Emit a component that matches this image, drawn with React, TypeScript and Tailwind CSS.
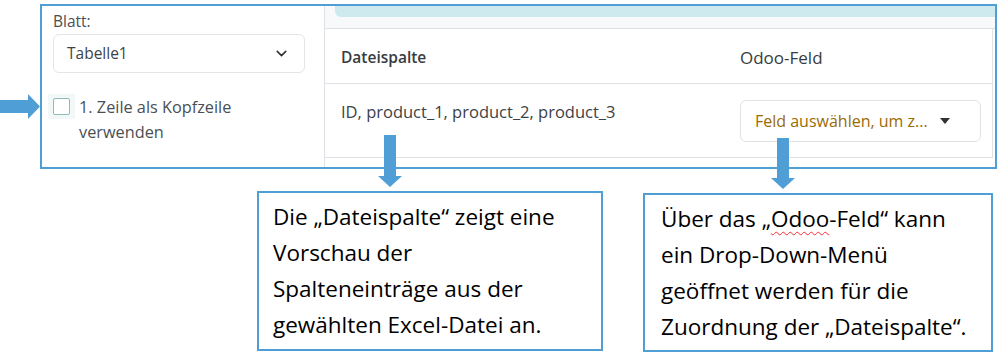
import { ChevronDown } from 'lucide-react';

const BLUE = '#4f9fd6';

// Pfeile der Anmerkungen (Office-Stil)
function ArrowRight() {
    return (
        <svg width="40" height="25" viewBox="0 0 40 25">
            <polygon points="0,6 28,6 28,0 40,12.5 28,25 28,19 0,19" fill={BLUE} />
        </svg>
    );
}

function ArrowDown({ height }: { height: number }) {
    return (
        <svg width="24" height={height} viewBox={`0 0 24 ${height}`}>
            <polygon points={`6,0 18,0 18,${height - 11} 24,${height - 11} 12,${height} 0,${height - 11} 6,${height - 11}`} fill={BLUE} />
        </svg>
    );
}

export default function App() {
    return (
        <div className="relative w-[1001px] h-[355px] bg-white overflow-hidden">
            {/* --- Screenshot-Ausschnitt --- */}
            <div className="flex items-start pt-[4px]">
                <div className="w-[40px] mt-[90px] flex">
                    <ArrowRight />
                </div>
                <div className="w-[957px] h-[165px] border-2 border-[#4f9fd6] flex font-['Open_Sans',sans-serif] text-[#3c4247]">
                    {/* Linke Spalte */}
                    <div className="w-[283px] border-r border-[#dee2e6] pl-[11px] pt-[5px]">
                        <div className="text-[15.5px] leading-[20px] text-[#4a4f54]">Blatt:</div>
                        <div className="mt-[3px] w-[252px] h-[39px] border border-[#e3e6e9] rounded-md flex items-center justify-between pl-[13px] pr-[14px] text-[15.5px]">
                            <span>Tabelle1</span>
                            <ChevronDown size={17} strokeWidth={2.2} color="#2f3337" />
                        </div>
                        <div className="mt-[22px] flex items-start">
                            <div className="-ml-[5px] mt-[-1px] w-[27px] h-[25px] bg-[#f2f7f7] flex items-center justify-center">
                                <div className="w-[17px] h-[17px] border border-[#8dbcbc] bg-white rounded-[2px]" />
                            </div>
                            <div className="ml-[4px] text-[16.3px] leading-[25px] text-[#4a4f54]">
                                1. Zeile als Kopfzeile
                                <br />
                                verwenden
                            </div>
                        </div>
                    </div>
                    {/* Rechte Spalte */}
                    <div className="flex-1 flex flex-col">
                        <div className="h-[23px] bg-[#f8f9fa] border-b border-[#dee2e6] pl-[10px]">
                            <div className="h-[11px] bg-[#cfeaef] rounded-bl-md" />
                        </div>
                        <div className="mr-[2px] border-r border-b border-[#dee2e6]">
                            <div className="h-[55px] border-b border-[#dee2e6] flex items-center pt-[3px] text-[#373c41]">
                                <div className="w-[399px] pl-[16px] text-[15.5px] font-semibold">Dateispalte</div>
                                <div className="pl-[16px] text-[17px]">Odoo-Feld</div>
                            </div>
                            <div className="h-[73px] flex items-start">
                                <div className="w-[399px] pl-[16px] pt-[17px] leading-[22px] text-[16.5px]">ID, product_1, product_2, product_3</div>
                                <div className="pl-[16px] pt-[16px]">
                                    <div className="w-[241px] h-[42px] border border-[#e0e3e6] rounded-md flex items-center justify-between pl-[14px] pr-[30px] text-[16px]">
                                        <span className="text-[#9a6a05]">Feld auswählen, um z...</span>
                                        <svg width="10" height="6" viewBox="0 0 10 6"><polygon points="0,0 10,0 5,6" fill="#2f3337" /></svg>
                                    </div>
                                </div>
                            </div>
                        </div>
                    </div>
                </div>
            </div>

            {/* --- Erklärungen --- */}
            <div className="flex items-start mt-[22px] font-['Open_Sans',sans-serif] text-[22.5px] leading-[36px] text-black whitespace-nowrap">
                <div className="ml-[257px] w-[346px] h-[160px] border-2 border-[#4f9fd6] pl-[14px] pt-[6px]">
                    Die „Dateispalte“ zeigt eine
                    <br />
                    Vorschau der
                    <br />
                    Spalteneinträge aus der
                    <br />
                    gewählten Excel-Datei an.
                </div>
                <div className="ml-[40px] mt-[2px] w-[350px] h-[159px] border-2 border-[#4f9fd6] pl-[16px] pt-[6px]">
                    Über das „<span className="underline decoration-wavy decoration-red-500 decoration-1 underline-offset-4">Odoo</span>-Feld“ kann
                    <br />
                    ein Drop-Down-Menü
                    <br />
                    geöffnet werden für die
                    <br />
                    Zuordnung der „Dateispalte“.
                </div>
            </div>

            {/* Pfeile über dem Screenshot */}
            <div className="absolute left-[378px] top-[135px]">
                <ArrowDown height={52} />
            </div>
            <div className="absolute left-[771px] top-[138px]">
                <ArrowDown height={51} />
            </div>
        </div>
    );
}
